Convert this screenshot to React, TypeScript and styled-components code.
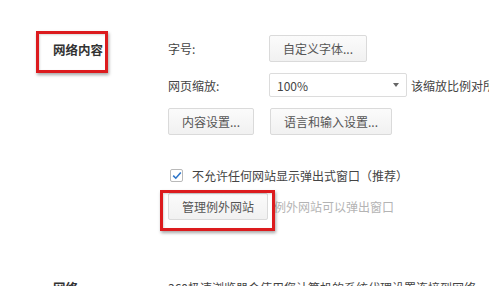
import styled, { createGlobalStyle } from "styled-components";

const GlobalStyle = createGlobalStyle`
  html, body {
    margin: 0;
    padding: 0;
    background: #ffffff;
  }
  body {
    font-family: "Noto Sans CJK SC", "Noto Sans", sans-serif;
    font-size: 12px;
    color: #333333;
    width: 489px;
    height: 286px;
    overflow: hidden;
  }
`;

const Page = styled.div`
  padding: 35px 0 0 53px;
`;

const Section = styled.section<{ gap?: number }>`
  display: grid;
  grid-template-columns: 115px 1fr;
  margin-top: ${({ gap }) => gap ?? 0}px;
`;

const TitleCell = styled.div`
  padding-top: 6px;
`;

const SectionTitle = styled.div`
  font-weight: bold;
  color: #333;
  font-size: 12.5px;
  line-height: 16px;
  white-space: nowrap;
`;

const Highlight = styled.span<{ t: number; r: number; b: number; l: number }>`
  position: relative;
  display: inline-flex;
  &::after {
    content: "";
    position: absolute;
    top: ${({ t }) => -t}px;
    right: ${({ r }) => -r}px;
    bottom: ${({ b }) => -b}px;
    left: ${({ l }) => -l}px;
    border: 3px solid #dc1b1e;
    box-shadow: 1px 2px 3px rgba(0, 0, 0, 0.35),
      inset 1px 1px 2px rgba(0, 0, 0, 0.15);
    pointer-events: none;
  }
`;

const Content = styled.div`
  display: flex;
  flex-direction: column;
`;

const Row = styled.div<{ mt?: number }>`
  display: flex;
  align-items: center;
  margin-top: ${({ mt }) => mt ?? 0}px;
  white-space: nowrap;
`;

const FieldLabel = styled.span`
  width: 101px;
  color: #444;
`;

const Button = styled.button`
  height: 27px;
  padding: 0 13px;
  font-family: inherit;
  font-size: 12px;
  color: #555;
  background: linear-gradient(#fbfbfb, #f1f1f1);
  border: 1px solid #dadada;
  border-radius: 2px;
  cursor: pointer;
  white-space: nowrap;
`;

const ButtonGroup = styled.div`
  display: flex;
  gap: 16px;
`;

const Select = styled.div`
  width: 138px;
  height: 24px;
  box-sizing: border-box;
  display: flex;
  align-items: center;
  justify-content: space-between;
  padding: 0 7px;
  border: 1px solid #dcdcdc;
  border-radius: 2px;
  background: #fff;
  color: #444;
`;

const Caret = styled.span`
  width: 0;
  height: 0;
  border-left: 3px solid transparent;
  border-right: 3px solid transparent;
  border-top: 4px solid #666;
`;

const Hint = styled.span<{ muted?: boolean }>`
  margin-left: ${({ muted }) => (muted ? 6 : 4)}px;
  color: ${({ muted }) => (muted ? "#b4b4b4" : "#444")};
`;

const CheckBox = styled.span`
  width: 13px;
  height: 13px;
  box-sizing: border-box;
  margin: 0 9px 0 2px;
  border: 1px solid #b9b9b9;
  border-radius: 2px;
  background: #fff;
  display: flex;
  align-items: center;
  justify-content: center;
`;

const CheckText = styled.span`
  color: #444;
`;

const BodyText = styled.span`
  color: #444;
  line-height: 16px;
`;

export default function App() {
  return (
    <>
      <GlobalStyle />
      <Page>
        <Section>
          <TitleCell>
            <Highlight t={11} r={5} b={15} l={17}>
              <SectionTitle>网络内容</SectionTitle>
            </Highlight>
          </TitleCell>
          <Content>
            <Row>
              <FieldLabel>字号:</FieldLabel>
              <Button>自定义字体...</Button>
            </Row>
            <Row mt={11}>
              <FieldLabel>网页缩放:</FieldLabel>
              <Select>
                <span>100%</span>
                <Caret />
              </Select>
              <Hint>该缩放比例对所有网页有效</Hint>
            </Row>
            <Row mt={11}>
              <ButtonGroup>
                <Button>内容设置...</Button>
                <Button>语言和输入设置...</Button>
              </ButtonGroup>
            </Row>
            <Row mt={32}>
              <CheckBox>
                <svg width="10" height="9" viewBox="0 0 10 9">
                  <path
                    d="M1.2 4.6 L3.8 7.2 L8.8 1.4"
                    fill="none"
                    stroke="#2f76c9"
                    strokeWidth="1.6"
                  />
                </svg>
              </CheckBox>
              <CheckText>不允许任何网站显示弹出式窗口（推荐）</CheckText>
            </Row>
            <Row mt={9}>
              <Highlight t={3} r={7} b={11} l={8}>
                <Button>管理例外网站</Button>
              </Highlight>
              <Hint muted>例外网站可以弹出窗口</Hint>
            </Row>
          </Content>
        </Section>
        <Section gap={60}>
          <SectionTitle>网络</SectionTitle>
          <Row>
            <BodyText>360极速浏览器会使用您计算机的系统代理设置连接到网络。</BodyText>
          </Row>
        </Section>
      </Page>
    </>
  );
}
